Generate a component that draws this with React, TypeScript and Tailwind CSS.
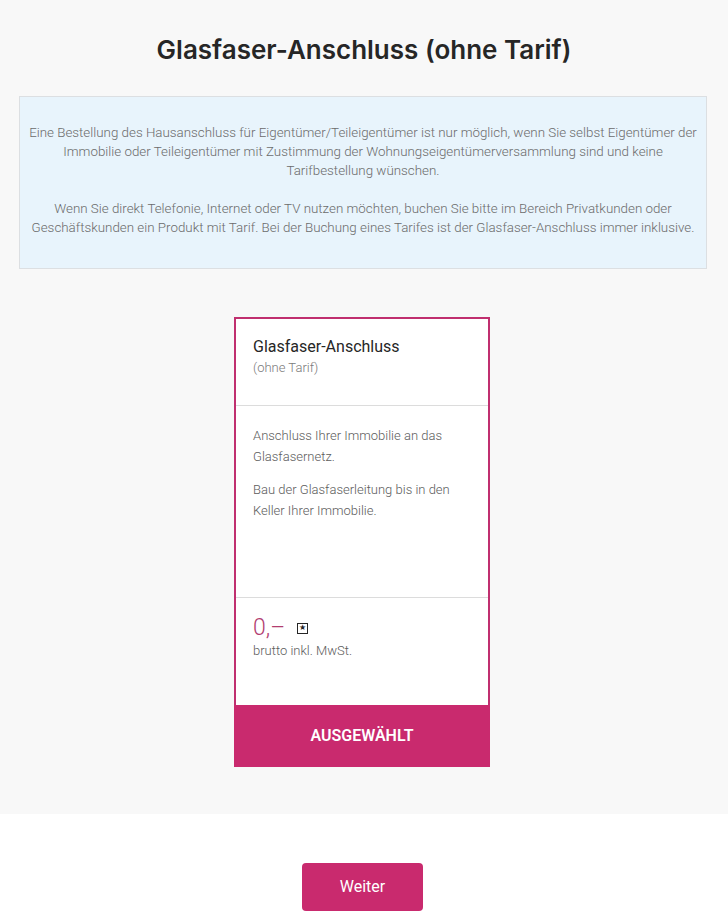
export default function App() {
  return (
    <div className="min-h-[912px] bg-white font-['Roboto',sans-serif]">
      <div className="bg-[#f8f8f8] pt-[33px] pb-[47px]">
        <h1 className="text-center font-['Inter',sans-serif] text-[26px] font-semibold leading-[34px] text-[#262626]">
          Glasfaser-Anschluss (ohne Tarif)
        </h1>

        <div className="ml-[19px] mr-[21px] mt-[29px] border border-[#dcdfe2] bg-[#e8f4fc] px-[7px] pt-[26px] pb-[31px] text-center text-[13.35px] font-light leading-[19px] text-[#6b6b6b]">
          <p>
            Eine Bestellung des Hausanschluss für Eigentümer/Teileigentümer ist nur möglich, wenn Sie selbst Eigentümer der
            Immobilie oder Teileigentümer mit Zustimmung der Wohnungseigentümerversammlung sind und keine
            Tarifbestellung wünschen.
          </p>
          <p className="mt-[19px]">
            Wenn Sie direkt Telefonie, Internet oder TV nutzen möchten, buchen Sie bitte im Bereich Privatkunden oder
            Geschäftskunden ein Produkt mit Tarif. Bei der Buchung eines Tarifes ist der Glasfaser-Anschluss immer inklusive.
          </p>
        </div>

        <div className="mt-[48px] flex justify-center pr-[4px]">
          <div className="w-[256px] border-2 border-[#c02f6f] bg-white">
            <div className="h-[87px] border-b border-[#dcdcdc] px-[17px] pt-[17px]">
              <div className="text-[16px] leading-[22px] text-[#262626]">Glasfaser-Anschluss</div>
              <div className="text-[13px] font-light leading-[20px] text-[#7a7a7a]">(ohne Tarif)</div>
            </div>
            <div className="h-[192px] border-b border-[#dcdcdc] px-[17px] pt-[19px] text-[13px] font-light leading-[21px] text-[#5c5c5c]">
              <p>Anschluss Ihrer Immobilie an das Glasfasernetz.</p>
              <p className="mt-[12px]">Bau der Glasfaserleitung bis in den Keller Ihrer Immobilie.</p>
            </div>
            <div className="h-[107px] px-[17px] pt-[16px]">
              <div className="flex items-center gap-[12px]">
                <span className="text-[23px] font-light leading-[28px] text-[#b23d70]">0,–</span>
                <span className="flex h-[11px] w-[11px] items-center justify-center border border-[#262626] text-[8px] leading-none text-[#262626]">
                  ★
                </span>
              </div>
              <div className="text-[13px] font-light leading-[18px] text-[#5c5c5c]">brutto inkl. MwSt.</div>
            </div>
            <div className="-mx-[2px] -mb-[2px] flex h-[62px] items-center justify-center bg-[#c92a6e] text-[16px] font-semibold text-white">
              AUSGEWÄHLT
            </div>
          </div>
        </div>
      </div>

      <div className="flex justify-center pt-[49px] pr-[3px]">
        <button className="h-[48px] w-[121px] rounded-[4px] bg-[#c92a6e] text-[16px] text-white">Weiter</button>
      </div>
    </div>
  );
}
